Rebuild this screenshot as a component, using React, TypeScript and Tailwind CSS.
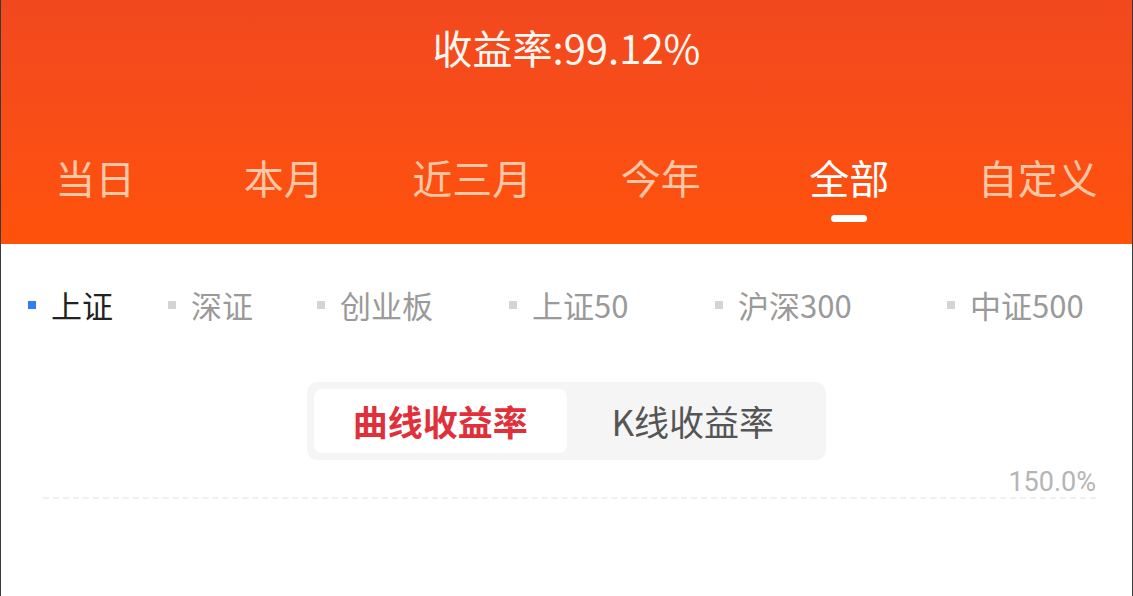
import React, { useState } from 'react';

const periods = ['当日', '本月', '近三月', '今年', '全部', '自定义'];

const indices = [
  { name: '上证', cls: 'w-[140px]' },
  { name: '深证', cls: 'w-[149px]' },
  { name: '创业板', cls: 'w-[192px]' },
  { name: '上证50', cls: 'w-[206px]' },
  { name: '沪深300', cls: 'w-[232px]' },
  { name: '中证500', cls: 'flex-1' },
];

export default function App() {
  const [period, setPeriod] = useState(4);
  const [index, setIndex] = useState(0);
  const [mode, setMode] = useState(0);

  return (
    <div
      className="w-[1133px] h-[596px] overflow-hidden bg-white border-x border-[#3a3a3a]"
      style={{ fontFamily: '"Noto Sans CJK SC", "Noto Sans", sans-serif' }}
    >
      <header className="h-[244px] bg-gradient-to-b from-[#f2481f] to-[#ff520a] flex flex-col">
        <h1 className="mt-[24px] text-center text-[40px] leading-[46px] text-[#fff7f0] font-normal">
          收益率:99.12%
        </h1>
        <div className="mt-[84px] grid grid-cols-6">
          {periods.map((p, i) => (
            <button
              key={p}
              onClick={() => setPeriod(i)}
              className="flex flex-col items-center"
            >
              <span
                className={`text-[40px] leading-[46px] ${
                  i === period ? 'text-white' : 'text-[#fdc7a6]'
                }`}
              >
                {p}
              </span>
              <span
                className={`mt-[15px] h-[7px] w-[36px] rounded-full ${
                  i === period ? 'bg-white' : 'bg-transparent'
                }`}
              />
            </button>
          ))}
        </div>
      </header>

      <div className="flex items-center h-[44px] mt-[39px] pl-[27px]">
        {indices.map((it, i) => (
          <button
            key={it.name}
            onClick={() => setIndex(i)}
            className={`flex items-center ${it.cls}`}
          >
            <span
              className={`w-[8px] h-[8px] ${i === index ? 'bg-[#2f7cf6]' : 'bg-[#d4d4d4]'}`}
            />
            <span
              className={`ml-[15px] text-[31px] leading-[40px] ${
                i === index ? 'text-[#222]' : 'text-[#9a9a9a]'
              }`}
            >
              {it.name}
            </span>
          </button>
        ))}
      </div>

      <div className="flex justify-center mt-[55px]">
        <div className="flex w-[519px] h-[78px] p-[7px] rounded-[10px] bg-[#f5f5f5]">
          {['曲线收益率', 'K线收益率'].map((m, i) => (
            <button
              key={m}
              onClick={() => setMode(i)}
              className={`w-[254px] rounded-[8px] text-[35px] ${
                i === mode
                  ? 'bg-white text-[#e0313b] font-bold'
                  : 'text-[#555] font-normal'
              }`}
            >
              {m}
            </button>
          ))}
        </div>
      </div>

      <div className="ml-[42px] mr-[36px] mt-[6px]">
        <div
          className="flex justify-end text-[27px] leading-[32px] text-[#b5b5b5]"
          style={{ fontFamily: 'Roboto, sans-serif' }}
        >
          150.0%
        </div>
        <div className="-mt-[1px] border-t-2 border-dashed border-[#f0f0f0]" />
      </div>
    </div>
  );
}
